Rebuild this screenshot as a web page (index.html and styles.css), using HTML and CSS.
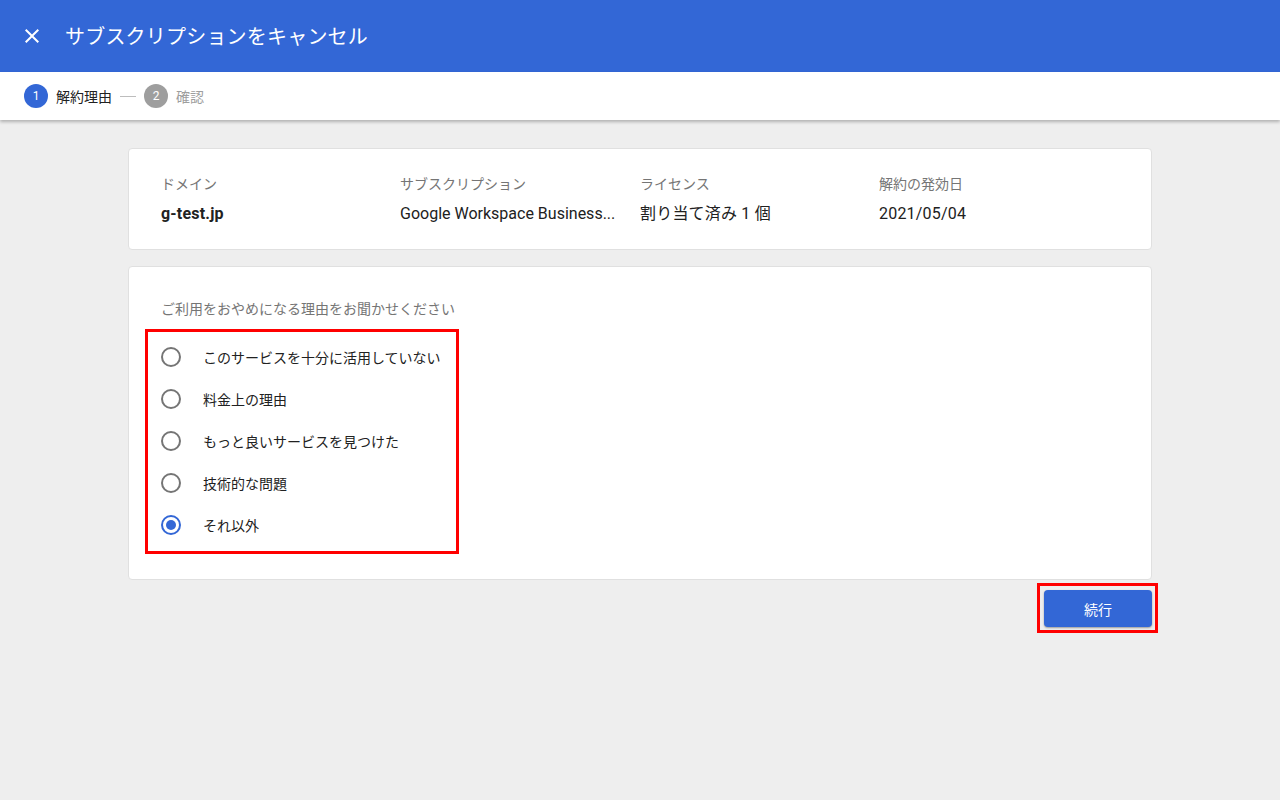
FILE: index.html
```html
<!DOCTYPE html>
<html lang="ja">
<head>
<meta charset="utf-8">
<title>サブスクリプションをキャンセル</title>
<link rel="stylesheet" href="styles.css">
</head>
<body>
<header class="topbar">
  <button class="close" aria-label="閉じる">
    <svg width="24" height="24" viewBox="0 0 24 24"><path d="M19 6.41 17.59 5 12 10.59 6.41 5 5 6.41 10.59 12 5 17.59 6.41 19 12 13.41 17.59 19 19 17.59 13.41 12z" fill="#fff"/></svg>
  </button>
  <h1 class="title">サブスクリプションをキャンセル</h1>
</header>
<nav class="stepper">
  <div class="step active"><span class="num">1</span><span class="label">解約理由</span></div>
  <span class="connector"></span>
  <div class="step"><span class="num">2</span><span class="label">確認</span></div>
</nav>
<main class="content">
  <section class="card summary">
    <div class="col"><div class="k">ドメイン</div><div class="v bold">g-test.jp</div></div>
    <div class="col"><div class="k">サブスクリプション</div><div class="v nowrap">Google Workspace Business...</div></div>
    <div class="col"><div class="k">ライセンス</div><div class="v">割り当て済み 1 個</div></div>
    <div class="col"><div class="k">解約の発効日</div><div class="v">2021/05/04</div></div>
  </section>
  <section class="card reasons">
    <p class="question">ご利用をおやめになる理由をお聞かせください</p>
    <div class="options">
      <label class="opt"><span class="radio"></span><span>このサービスを十分に活用していない</span></label>
      <label class="opt"><span class="radio"></span><span>料金上の理由</span></label>
      <label class="opt"><span class="radio"></span><span>もっと良いサービスを見つけた</span></label>
      <label class="opt"><span class="radio"></span><span>技術的な問題</span></label>
      <label class="opt"><span class="radio checked"></span><span>それ以外</span></label>
    </div>
  </section>
  <div class="actions">
    <div class="highlight"><button class="primary">続行</button></div>
  </div>
</main>
</body>
</html>
```

FILE: styles.css
```css
* { box-sizing: border-box; }
html, body { margin: 0; padding: 0; }
body {
  background: #eeeeee;
  font-family: Roboto, "Noto Sans CJK JP", "Noto Sans", sans-serif;
  color: #212121;
  width: 1280px;
  height: 800px;
  overflow: hidden;
}
.topbar {
  height: 72px;
  background: #3367d6;
  display: flex;
  align-items: center;
  padding-left: 20px;
}
.close {
  width: 24px;
  height: 24px;
  padding: 0;
  border: 0;
  background: none;
  display: flex;
}
.title {
  margin: -2px 0 0 21px;
  font-size: 20px;
  font-weight: 400;
  color: #fff;
  letter-spacing: 0.2px;
}
.stepper {
  height: 48px;
  background: #fff;
  display: flex;
  align-items: center;
  padding-left: 24px;
  box-shadow: 0 2px 3px rgba(0,0,0,0.25);
  position: relative;
}
.step { display: flex; align-items: center; }
.num {
  width: 24px;
  height: 24px;
  border-radius: 50%;
  background: #9e9e9e;
  color: #fff;
  font-size: 12px;
  display: flex;
  align-items: center;
  justify-content: center;
}
.step.active .num { background: #3367d6; }
.label { margin-left: 8px; font-size: 14px; color: #9e9e9e; margin-top: -1px; }
.step.active .label { color: #212121; }
.connector {
  width: 16px;
  height: 1px;
  background: #bdbdbd;
  margin: 0 8px;
}
.content {
  width: 1024px;
  margin: 28px auto 0;
}
.card {
  background: #fff;
  border: 1px solid #e0e0e0;
  border-radius: 4px;
}
.summary {
  height: 102px;
  display: grid;
  grid-template-columns: 239px 240px 239px 240px;
  padding: 26px 32px 0;
}
.k { font-size: 14px; color: #757575; line-height: 18px; }
.v { font-size: 16px; line-height: 20px; margin-top: 11px; color: #212121; letter-spacing: 0.2px; }
.v.bold { font-weight: 700; }
.nowrap { white-space: nowrap; letter-spacing: 0; }
.reasons {
  margin-top: 16px;
  height: 314px;
  padding: 33px 16px 0;
}
.question {
  margin: 0 0 0 16px;
  font-size: 14px;
  line-height: 18px;
  color: #757575;
}
.options {
  width: 314px;
  margin-top: 11px;
  border: 3px solid #ff0000;
  padding: 4px 0 5px;
}
.opt {
  height: 42px;
  display: flex;
  align-items: center;
  padding-left: 13px;
  font-size: 14px;
  color: #212121;
}
.radio {
  width: 20px;
  height: 20px;
  border: 2px solid #757575;
  border-radius: 50%;
  margin-right: 22px;
  flex: none;
  position: relative;
}
.radio.checked { border-color: #3367d6; }
.radio.checked::after {
  content: "";
  position: absolute;
  left: 3px;
  top: 3px;
  width: 10px;
  height: 10px;
  border-radius: 50%;
  background: #3367d6;
}
.actions {
  display: flex;
  justify-content: flex-end;
  margin-right: -6px;
  margin-top: 3px;
}
.highlight {
  border: 3px solid #ff0000;
  padding: 4px 3px 3px 4px;
}
.primary {
  width: 108px;
  height: 37px;
  background: #3367d6;
  color: #fff;
  border: 0;
  border-radius: 4px;
  font-family: Roboto, "Noto Sans CJK JP", sans-serif;
  font-size: 14px;
  box-shadow: 0 1px 2px rgba(0,0,0,0.35);
  display: block;
}
```
